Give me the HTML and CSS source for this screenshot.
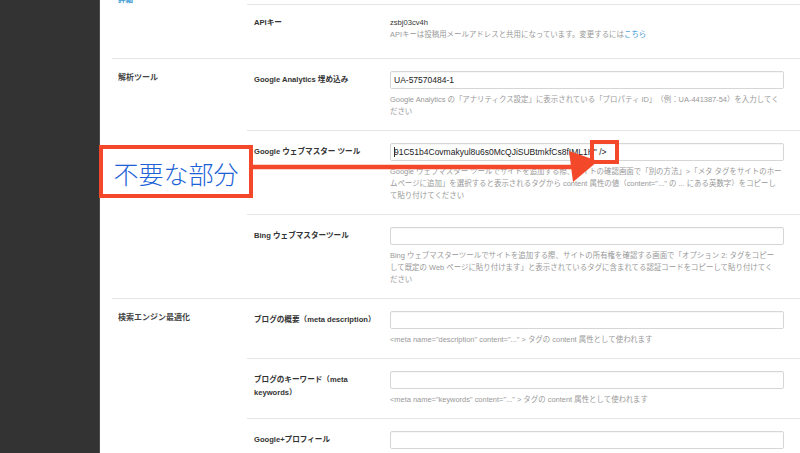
FILE: index.html
```html
<!DOCTYPE html>
<html lang="ja">
<head>
<meta charset="utf-8">
<title>ブログ設定</title>
<link rel="stylesheet" href="styles.css">
</head>
<body>
<div class="page">
  <aside class="sidebar"></aside>
  <main class="main">
    <section class="section section--first">
      <div class="section-title section-title--first"><a class="link top-link" href="#">詳細</a></div>
      <div class="rows">
        <div class="row-stub"></div>
        <div class="row row--api">
          <div class="label">APIキー</div>
          <div class="field">
            <div class="value">zsbj03cv4h</div>
            <p class="help">APIキーは投稿用メールアドレスと共用になっています。変更するには<a class="link" href="#">こちら</a></p>
          </div>
        </div>
      </div>
    </section>

    <section class="section">
      <h2 class="section-title">解析ツール</h2>
      <div class="rows">
        <div class="row">
          <div class="label">Google Analytics 埋め込み</div>
          <div class="field">
            <div class="input">UA-57570484-1</div>
            <p class="help">Google Analytics の「アナリティクス設定」に表示されている「プロパティ ID」（例：UA-441387-54）を入力してく<br>ださい</p>
          </div>
        </div>
        <div class="row">
          <div class="label">Google ウェブマスター ツール</div>
          <div class="field">
            <div class="input"><span class="caret">91C51b4Covmakyul8u6s0McQJiSUBtmkfCs8fIML1H" /&gt;</span></div>
            <p class="help">Google ウェブマスター ツールでサイトを追加する際、サイトの確認画面で「別の方法」&gt;「メタ タグをサイトのホー<br>ムページに追加」を選択すると表示されるタグから content 属性の値（content="..." の ... にある英数字）をコピーし<br>て貼り付けてください</p>
          </div>
        </div>
        <div class="row">
          <div class="label">Bing ウェブマスターツール</div>
          <div class="field">
            <div class="input"></div>
            <p class="help">Bing ウェブマスターツールでサイトを追加する際、サイトの所有権を確認する画面で「オプション 2: タグをコピー<br>して既定の Web ページに貼り付けます」と表示されているタグに含まれてる認証コードをコピーして貼り付けてく<br>ださい</p>
          </div>
        </div>
      </div>
    </section>

    <section class="section">
      <h2 class="section-title">検索エンジン最適化</h2>
      <div class="rows">
        <div class="row">
          <div class="label">ブログの概要（meta description）</div>
          <div class="field">
            <div class="input"></div>
            <p class="help">&lt;meta name="description" content="..." &gt; タグの content 属性として使われます</p>
          </div>
        </div>
        <div class="row">
          <div class="label">ブログのキーワード（meta keywords）</div>
          <div class="field">
            <div class="input"></div>
            <p class="help">&lt;meta name="keywords" content="..." &gt; タグの content 属性として使われます</p>
          </div>
        </div>
        <div class="row">
          <div class="label">Google+プロフィール</div>
          <div class="field">
            <div class="input"></div>
          </div>
        </div>
      </div>
    </section>
  </main>

  <div class="annotations">
    <svg class="arrow" width="800" height="453" viewBox="0 0 800 453">
      <line x1="250" y1="167" x2="576" y2="167" stroke="#f4482a" stroke-width="4.5"/>
      <polygon points="569,151 598,161 573,182" fill="#f4482a"/>
    </svg>
    <div class="mark-box"></div>
    <div class="callout">不要な部分</div>
  </div>
</div>
</body>
</html>
```

FILE: styles.css
```css
* {
  box-sizing: border-box;
}

html,
body {
  margin: 0;
  padding: 0;
  background: #fff;
}

body {
  font-family: "Liberation Sans", "Noto Sans CJK JP", sans-serif;
  color: #333;
  text-spacing-trim: space-all;
}

.page {
  position: relative;
  display: flex;
  width: 800px;
  height: 453px;
  overflow: hidden;
}

.sidebar {
  flex: 0 0 100px;
  background: #333;
  border-right: 1px solid #4a4a4a;
}

.main {
  flex: 1;
  min-width: 0;
  padding-left: 12px;
}

.section {
  display: grid;
  grid-template-columns: 135px 1fr;
  border-top: 1px solid #e6e6e6;
}

.section--first {
  border-top: 0;
}

.section-title {
  margin: 0;
  padding: 12px 0 0 6px;
  font-size: 8px;
  line-height: 13px;
  font-weight: bold;
  color: #444;
}

.section-title--first {
  padding-top: 0;
}

.link {
  color: #3d9bd6;
  text-decoration: none;
}

.top-link {
  display: block;
  margin-top: -6px;
  font-size: 7.5px;
  line-height: 12px;
  font-weight: bold;
}

.rows > * + * {
  border-top: 1px solid #e6e6e6;
}

.row-stub {
  height: 4px;
}

.row {
  display: flex;
  padding: 12px 16px 12px 7px;
}

.label {
  flex: 0 0 136px;
  padding-right: 8px;
  margin-top: 2px;
  font-size: 7.6px;
  line-height: 13px;
  font-weight: bold;
  color: #333;
}

.field {
  flex: 1;
  min-width: 0;
}

.input {
  height: 18px;
  padding: 0 3px;
  border: 1px solid #d6d6d6;
  border-radius: 2px;
  background: #fff;
  box-shadow: inset 0 1px 1px rgba(0, 0, 0, 0.04);
  font-size: 8.5px;
  line-height: 16px;
  color: #222;
  white-space: nowrap;
  overflow: hidden;
}

.caret {
  position: relative;
}

.caret::before {
  content: "";
  position: absolute;
  left: 0;
  top: 0;
  bottom: 0;
  border-left: 1px solid #333;
}

.help {
  margin: 5px 0 0;
  font-size: 7.45px;
  line-height: 12px;
  color: #999;
  white-space: nowrap;
}

.value {
  font-size: 7.6px;
  line-height: 12px;
  color: #333;
}

.row--api {
  padding-bottom: 17px;
}

.row--api .label {
  margin-top: 0;
  line-height: 12px;
}

.row--api .help {
  margin-top: 0;
}

/* Annotation overlay (screenshot markup) */
.annotations {
  position: absolute;
  inset: 0;
  pointer-events: none;
}

.arrow {
  position: absolute;
  left: 0;
  top: 0;
}

.mark-box {
  position: absolute;
  left: 590px;
  top: 140px;
  width: 29px;
  height: 24px;
  border: 4px solid #f4482a;
}

.callout {
  position: absolute;
  left: 99px;
  top: 145px;
  width: 154px;
  height: 53px;
  border: 4px solid #f4482a;
  background: #fff;
  display: flex;
  align-items: center;
  justify-content: center;
  padding-top: 3px;
  font-family: "Noto Sans CJK JP", sans-serif;
  font-size: 25px;
  font-weight: 300;
  line-height: 1;
  color: #1c62d6;
}
```
